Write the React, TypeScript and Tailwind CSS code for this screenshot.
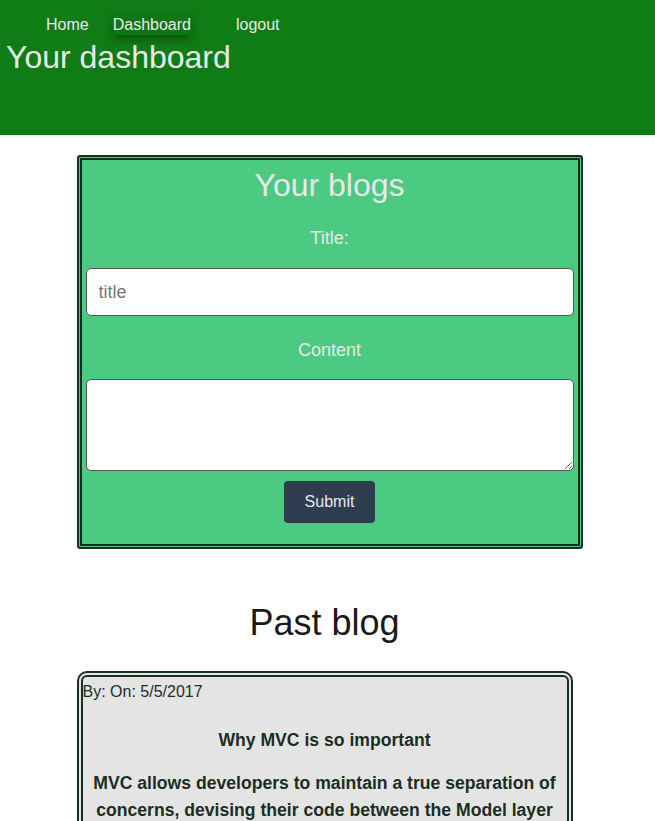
import React from "react";

export default function App() {
  return (
    <div className="min-h-screen bg-white font-['Liberation_Sans',Arial,sans-serif]">
      <header className="h-[135px] bg-[#107c15] text-[#e8e8e8]">
        <nav className="flex pt-[15px] pl-[46px] text-[16px] leading-[20px]">
          <a className="mr-[24px]">Home</a>
          <a className="mr-[45px] bg-[#0f7614] shadow-[0_4px_10px_rgba(0,0,0,0.35)]">Dashboard</a>
          <a>logout</a>
        </nav>
        <h1 className="pl-[6px] text-[32px] leading-[40px] mt-[2px]">Your dashboard</h1>
      </header>

      <main className="flex flex-col items-center">
        <section className="ml-[4px] mt-[20px] w-[506px] rounded-[3px] border-[5px] border-double border-[#15301f] bg-[#4dca82] px-[4px] pb-[21px] text-center">
          <h2 className="mt-[5px] text-[32px] leading-[40px] text-[#e8e8e8]">Your blogs</h2>
          <label className="mt-[21px] block text-[18px] leading-[24px] text-[#e8e8e8]">Title:</label>
          <input
            placeholder="title"
            className="mt-[18px] block h-[48px] w-full rounded-[5px] border border-[#555] bg-white px-[12px] text-[18px] text-black placeholder:text-[#777] outline-none"
          />
          <label className="mt-[22px] block text-[18px] leading-[24px] text-[#e8e8e8]">Content</label>
          <textarea className="mt-[17px] block h-[92px] w-full rounded-[5px] border border-[#555] bg-white outline-none" />
          <button className="mt-[10px] h-[42px] w-[91px] rounded-[4px] bg-[#2e3e50] text-[16px] text-[#e8e8e8]">
            Submit
          </button>
        </section>

        <h2 className="mt-[52px] -translate-x-[3px] text-[36px] leading-[44px] text-[#1a1a1a]">Past blog</h2>

        <article className="mt-[26px] w-[496px] -translate-x-[3px] rounded-[10px] border-[6px] border-double border-[#1b2e22] bg-[#e4e4e4] pt-[3px] pb-[20px] text-[#1b2e22]">
          <p className="text-[16px] leading-[24px]">By: On: 5/5/2017</p>
          <h3 className="mt-[24px] text-center text-[17.6px] font-bold leading-[24px]">Why MVC is so important</h3>
          <p className="mt-[18px] px-[8px] text-center text-[17.6px] font-bold leading-[27px]">
            MVC allows developers to maintain a true separation of concerns, devising their code between the Model layer for data, the View layer for design, and the Controller layer for application logic.
          </p>
        </article>
      </main>
    </div>
  );
}
